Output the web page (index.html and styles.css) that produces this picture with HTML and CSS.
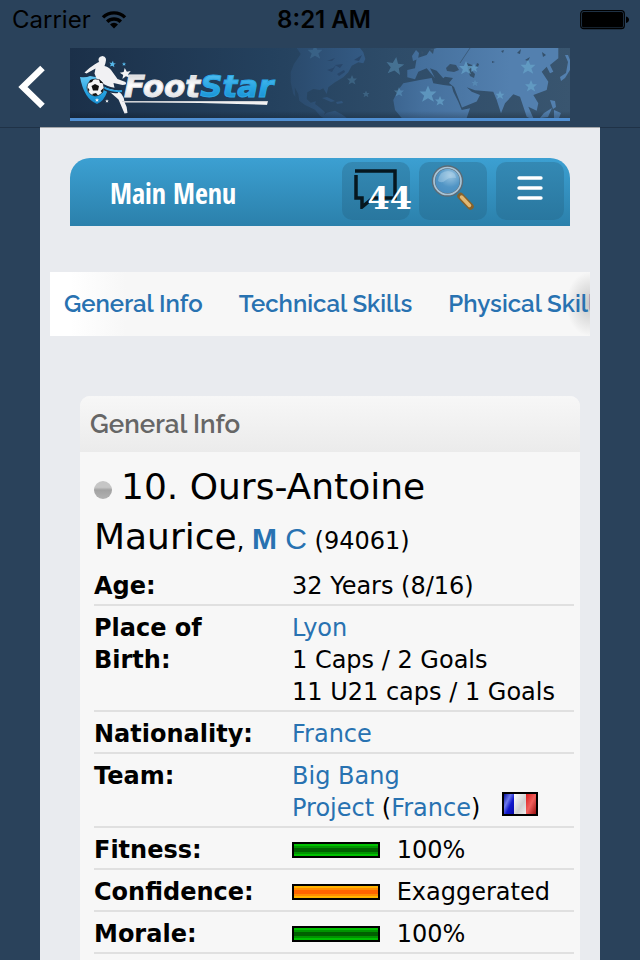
FILE: index.html
```
<!DOCTYPE html>
<html lang="en">
<head>
  <meta charset="UTF-8" />
  <meta name="viewport" content="width=device-width, initial-scale=1" />
  <title>FootStar</title>
  <link rel="stylesheet" href="styles.css">
</head>
<body>
  <div class="status-bar">
    <div class="carrier">
      <span>Carrier</span>
      <svg width="26" height="20" viewBox="0 0 26 20" fill="none" stroke="#000" stroke-width="3.4">
        <path d="M2 7.4a15.600 15.600 0 0 1 22 0"/>
        <path d="M6.200 11.800a9.600 9.600 0 0 1 13.600 0"/>
        <path d="M13 18.500l-4-4.100a5.700 5.700 0 0 1 8 0z" fill="#000" stroke="none"/>
      </svg>
    </div>
    <time class="clock">8:21 AM</time>
    <svg class="battery" width="50" height="20" viewBox="0 0 50 20">
      <rect x="0.700" y="0.700" width="43.600" height="18" rx="3" fill="none" stroke="#000" stroke-width="1.200"/>
      <rect x="2" y="2" width="41" height="15.400" rx="1.500"/>
      <path d="M46 6.500c4 .5 4 6 0 6.500z"/>
    </svg>
  </div>

  <header class="header">
    <button class="back" type="button" aria-label="Back">
      <svg width="28" height="46" viewBox="0 0 28 46" fill="none" stroke="#fff" stroke-width="6.500">
        <path d="M24.500 4L5 23l19.500 19"/>
      </svg>
    </button>
    <a class="banner" href="#" aria-label="FootStar">
      <svg viewBox="0 0 500 73">
        <defs>
          <linearGradient id="sea"><stop offset="0" stop-color="#1b3049"/><stop offset=".4" stop-color="#24415e"/><stop offset=".65" stop-color="#2e4c69"/><stop offset="1" stop-color="#39556f"/></linearGradient>
          <linearGradient id="land" gradientUnits="userSpaceOnUse" x1="220" y1="0" x2="440" y2="0"><stop offset="0" stop-color="#2a4a6c"/><stop offset=".35" stop-color="#345b85"/><stop offset=".6" stop-color="#45709d"/><stop offset="1" stop-color="#5380af"/></linearGradient>
          <linearGradient id="silver" x2="0" y2="1"><stop offset="0" stop-color="#bfc1c6"/><stop offset=".5" stop-color="#fff"/><stop offset="1" stop-color="#cfd1d5"/></linearGradient>
          <linearGradient id="blue" x2="0" y2="1"><stop offset="0" stop-color="#65c8f5"/><stop offset=".55" stop-color="#27a5e3"/><stop offset="1" stop-color="#1589cc"/></linearGradient>
          <linearGradient id="shade" x2="0" y2="1"><stop offset=".9" stop-color="#000" stop-opacity="0"/><stop offset="1" stop-color="#000" stop-opacity=".2"/></linearGradient>
          <path id="star" d="M0-10L3-3 10-3 4.500 2 7 9 0 5-7 9-4.500 2-10-3-3-3z"/>
        </defs>
        <rect width="500" height="70" fill="url(#sea)"/>

        <!-- world map -->
        <g fill="url(#land)">
          <path d="M226.700 0L230.700 6 224 16 220.700 24.300V34.300L223.300 46 225.300 48.700 224.700 39.300 228.300 46 229.300 52.700 235 57 245 61.700 250 67.700 253.300 70H276.700L272 66.500 265 62.700 256.700 64.700 254 67 255 64.300 249.300 59.300 245 56 246 53.300 240.700 54.700 236.700 51 237.300 44.300 243.300 41 250 42 253.300 40.300 256.700 46 258.300 39.300 265 34.300 273.300 29.300 278.300 24.300 281.700 17.700 288.300 14.300 293.300 15.300 295.300 11 293.300 4.300 290 0z"/>
          <path d="M252 50l5-1 8 4-4 1zM266 54l6-1 1 2-6 1z"/>
          <path d="M328.300 42L333.300 35.300 350 32 361.700 30 363.300 35.300 373.300 37 381.700 38 383.300 43.700 388.300 53.700 391.700 62 400 60.300 396.700 70H331.700L325 62 323.300 52z"/>
          <path d="M379 35l5 4 8 20.500 14.700-6 3.300-6.500-8.300-3.300-5-4.500 8.300 3 18.300 1.500 3.400 8.300L431 65.300 435 55.300 443.300 46.300 450 48.700 456.700 68.700 459.300 70h4L458.300 58.700 466.700 62.700 468.300 55.300 463.300 47 476.700 42 478.300 33.700 471.700 23.700 476.700 18.700 480 25.300 483.300 23.700 480 17 488.300 10.300V0H366.700L360 2 356.700 7 346.700 10.300 345 20.300 337.300 22V29.300L345 31.300 348.300 23.700 356.700 20.300 365 30.300 360 20.300 366.700 22.700 373.300 30.300 375 28.700 383 30z"/>
          <path d="M342 8l4-6 3 3-1 6-5 2zM490 29l6-4 2-11-3-7h3l2 5v10l-5 8-4 3zM480 52l5 1 1 6-3 2zM484 62l7 3-2 5h-5zM474 65l8-5-4 9-8 1z"/>
        </g>
        <g fill="#35516c">
          <path d="M376 20l4-4 6 1 3 5-5 2-7-1zM397 15l5 2-1 5 4 4-1 4-4-2-2-6zM407 15l2 1-1 3-2-1zM351 3l3 1-2 3zM359 2l5-1-1 5zM431 3l3-1-1 3zM422 13l3 1-3 1zM447 5l4-4-1 5zM455 12l5-3-2 4zM472 4l4 3-3 2z"/>
          <path d="M257 22l6-2 3-3-4 7zM265 17l8-1-3 4zM267 26l7-4 1 2-6 4zM257 13l8-3-3 3zM284 12l8-5-3 6z" fill="#29476a"/>
        </g>
        <path d="M390 15l6-9 4-6" fill="none" stroke="#35516c" stroke-width=".7"/>
        <g fill="#68a5cb" opacity=".7">
          <use href="#star" transform="translate(325 18) rotate(8) scale(.9)" opacity=".6"/>
          <use href="#star" transform="translate(358 46) scale(.85)"/>
          <use href="#star" transform="translate(370 53) scale(.5)"/>
          <use href="#star" transform="translate(396 20) scale(.7)"/>
          <use href="#star" transform="translate(404 20) scale(.45)"/>
          <use href="#star" transform="translate(458 19) scale(.75)"/>
          <use href="#star" transform="translate(461 38) scale(.6)"/>
          <use href="#star" transform="translate(430 47) scale(.45)"/>
          <use href="#star" transform="translate(405 35) scale(.35)" opacity=".5"/>
          <use href="#star" transform="translate(329 44) scale(.5)" opacity=".6"/>
          <use href="#star" transform="translate(282 32) scale(.5)" opacity=".4"/>
          <use href="#star" transform="translate(296 46) scale(.35)" opacity=".4"/>
          <use href="#star" transform="translate(245 4) scale(.75)" opacity=".3"/>
        </g>

        <!-- player -->
        <path d="M10 29q6 1 10-1l16 3 1 13q-3 9-10 12-13-5-17-27z" fill="url(#blue)"/>
        <path d="M29 14q-2-5 3.500-6 5 1 3 7l-1 3q5 1 8 6l5 7 8 3q2 3-3 3l-9-2 1 5 7 6q3 4 3 8 3 5 3 11l-3 .5-6-14-8-7-12-9-4-10 1-5-9 5-2-1q5-5 10-8 4-3 7-3z" fill="#f1f1f3"/>
        <path d="M33 37q9 5 18 4M34 41q8 4 14 3" fill="none" stroke="#1c3048" stroke-width="2.200"/>
        <path d="M33 39q9 5 19 4" fill="none" stroke="#2ba5e3" stroke-width="2"/>
        <circle cx="25.500" cy="39.500" r="8.500" fill="#f4f4f5" stroke="#17222f" stroke-width=".7"/>
        <path d="M25 36l4 2-1 4.500h-5L21.500 38zM20 32l4-1-2 3-3 1zM29 31l4 4-3 0zM17.500 39l2 3-1 2zM33.500 40l-1 5-2-2zM22 46l4-1 2 2.500-4 .5z" fill="#111"/>
        <g fill="#f4f4f5">
          <use href="#star" transform="translate(55.500 25.500) rotate(-8) scale(.55)"/>
          <use href="#star" transform="translate(27 52) scale(.2)"/>
          <use href="#star" transform="translate(37 53) scale(.18)"/>
        </g>
        <g fill="#56b8ea">
          <use href="#star" transform="translate(42.500 16) rotate(8) scale(.33)"/>
          <use href="#star" transform="translate(54 16) scale(.2)"/>
        </g>
        <path d="M52 53h146l-1 4q-70-3-145-2.500z" fill="url(#silver)"/>
        <text class="logo-text" x="54" y="49"><tspan fill="url(#silver)" stroke="#e4e5e8">Foot</tspan><tspan fill="url(#blue)" stroke="#2ba7e5">Star</tspan></text>

        <rect width="500" height="70" fill="url(#shade)"/>
        <rect y="70" width="500" height="3" fill="#508fd2"/>
      </svg>
    </a>
  </header>

  <div class="page">
    <main class="content">
      <nav class="main-menu">
        <span class="menu-title">Main Menu</span>
        <button class="menu-btn" type="button" aria-label="Messages">
          <svg width="46" height="42" viewBox="0 0 46 42" fill="none" stroke="#06171f" stroke-width="3.500">
            <path d="M3 8v23h6v9l11-9h22V4H2"/>
          </svg>
          <span class="badge">44</span>
        </button>
        <button class="menu-btn" type="button" aria-label="Search">
          <svg width="46" height="46" viewBox="0 2 46 46">
            <defs>
              <radialGradient id="lens" cx=".6" cy=".3" r=".7"><stop offset="0" stop-color="#9cc6e2"/><stop offset=".6" stop-color="#5195c5"/><stop offset="1" stop-color="#498dc0"/></radialGradient>
            </defs>
            <path d="M30.500 33l10 10.500" stroke="#86622c" stroke-width="6.500" stroke-linecap="round"/>
            <path d="M31.500 34l8 8.500" stroke="#e2b873" stroke-width="3.500" stroke-linecap="round"/>
            <circle cx="17.500" cy="18" r="14" fill="url(#lens)" stroke="#5b6b76" stroke-width="3.500"/>
            <circle cx="17.500" cy="18" r="13.500" fill="none" stroke="#a9c4d6" stroke-width="1.700"/>
            <path d="M8 18q1-10 10-10 8 1 8 7-7-1-10 2-4 4-8 1z" fill="#c3dff0" opacity=".35"/>
          </svg>
        </button>
        <button class="menu-btn" type="button" aria-label="Menu">
          <svg width="26" height="26" viewBox="0 0 26 26" stroke="#fff" stroke-width="3.400" stroke-linecap="round">
            <path d="M2 3h22M2 13h22M2 23h22"/>
          </svg>
        </button>
      </nav>

      <nav class="tabs">
        <a href="#general">General Info</a>
        <a href="#technical">Technical Skills</a>
        <a href="#physical">Physical Skills</a>
      </nav>

      <section class="card" id="general">
        <h2 class="card-title">General Info</h2>
        <div class="card-body">
          <h1 class="player"><span class="dot"></span>10. Ours-Antoine Maurice<span class="details">, <a class="position" href="#"><b>M</b> C</a> (94061)</span></h1>
          <table class="info">
            <tr>
              <th scope="row">Age:</th>
              <td>32 Years (8/16)</td>
            </tr>
            <tr>
              <th scope="row">Place of Birth:</th>
              <td><a href="#">Lyon</a><br>1 Caps / 2 Goals<br>11 U21 caps / 1 Goals</td>
            </tr>
            <tr>
              <th scope="row">Nationality:</th>
              <td><a href="#">France</a></td>
            </tr>
            <tr>
              <th scope="row">Team:</th>
              <td><a href="#">Big Bang<br>Project</a> (<a href="#">France</a>)
                <svg class="flag" width="36" height="24" viewBox="0 0 36 24">
                  <defs>
                    <linearGradient id="fb" x2="1" y2="1"><stop offset="0" stop-color="#0a14a0"/><stop offset=".35" stop-color="#6c78ec"/><stop offset=".6" stop-color="#1119cd"/><stop offset="1" stop-color="#0808a8"/></linearGradient>
                    <linearGradient id="fw" x2="1" y2="1"><stop offset="0" stop-color="#fff"/><stop offset=".6" stop-color="#d0d0d0"/><stop offset="1" stop-color="#eee"/></linearGradient>
                    <linearGradient id="fr" x2="1" y2="1"><stop offset="0" stop-color="#dd1c1c"/><stop offset=".5" stop-color="#f0605c"/><stop offset="1" stop-color="#9b1010"/></linearGradient>
                  </defs>
                  <rect width="36" height="24"/>
                  <path d="M2 2h10v20H2z" fill="url(#fb)"/>
                  <path d="M12 2h12v20H12z" fill="url(#fw)"/>
                  <path d="M24 2h10v20H24z" fill="url(#fr)"/>
                </svg>
              </td>
            </tr>
            <tr>
              <th scope="row">Fitness:</th>
              <td><span class="bar bar-green"></span> 100%</td>
            </tr>
            <tr>
              <th scope="row">Confidence:</th>
              <td><span class="bar bar-orange"></span> Exaggerated</td>
            </tr>
            <tr>
              <th scope="row">Morale:</th>
              <td><span class="bar bar-green"></span> 100%</td>
            </tr>
          </table>
        </div>
      </section>
    </main>
  </div>
</body>
</html>
```
FILE: styles.css
```
:root {
  --navy: #2a425b;
  --link: #2872b1;
  --panel: #f7f7f7;
  --page: #e9ebef;
}
* { box-sizing: border-box; }
body {
  margin: 0;
  min-height: 100vh;
  display: flex;
  flex-direction: column;
  background: var(--navy);
  color: #000;
  font-family: Verdana, "DejaVu Sans", sans-serif;
  font-size: 24px;
  line-height: 32px;
}
a {
  color: var(--link);
  text-decoration: none;
}
button {
  border: 0;
  padding: 0;
  background: none;
  cursor: pointer;
}
svg { display: block; }

/* status bar */
.status-bar {
  display: grid;
  grid-template-columns: 1fr auto 1fr;
  align-items: center;
  height: 40px;
  padding: 0 10px 0 12px;
  font-family: Inter, sans-serif;
}
.carrier {
  display: flex;
  align-items: center;
  gap: 10px;
}
.clock {
  padding-left: 6px;
  font-weight: 600;
}
.battery { justify-self: end; }

/* header */
.header {
  display: flex;
  align-items: center;
  height: 87px;
  padding: 2px 70px 0 0;
}
.back {
  flex: none;
  width: 70px;
  padding: 4px 0 0 18px;
}
.banner { flex: 1; }
.logo-text {
  font: italic bold 31px "DejaVu Sans", sans-serif;
}

.page {
  flex: 1;
  display: flex;
  padding: 0 40px;
  border-top: 1px solid #1f3247;
}
.content {
  flex: 1;
  min-width: 0;
  display: flex;
  flex-direction: column;
  margin-top: -1px;
  padding-top: 30px;
  border-top: 1px solid #a3a5a9;
  background: var(--page);
}

/* main menu */
.main-menu {
  display: flex;
  gap: 9px;
  height: 68px;
  margin: 0 30px;
  padding: 4px 6px 6px 40px;
  border-radius: 20px 20px 0 0;
  background: linear-gradient(#3ca0d2, #2b80ab);
}
.menu-title {
  flex: 1;
  color: #fff;
  font: bold 28px/62px "Open Sans Condensed", "Liberation Sans Narrow", "DejaVu Sans Condensed", sans-serif;
}
.menu-btn {
  position: relative;
  width: 68px;
  height: 58px;
  padding-bottom: 6px;
  border-radius: 10px;
  background: linear-gradient(#3489b4, #29779f);
}
.menu-btn svg { margin: 0 auto; }
.badge {
  position: absolute;
  top: 16px;
  right: -2px;
  color: #fff;
  font: bold 32px/40px "DejaVu Serif", serif;
}

/* tabs */
.tabs {
  display: flex;
  gap: 36px;
  margin: 46px 10px 60px;
  padding: 0 14px;
  overflow: hidden;
  white-space: nowrap;
  background:
    radial-gradient(24px 32px at 100% 50%, #c8c8c8, rgba(247, 247, 247, 0)),
    linear-gradient(90deg, #fff 20px, var(--panel) 76px);
  font: 600 24px/64px Raleway, Lato, sans-serif;
}

/* card */
.card {
  flex: 1;
  margin: 0 20px 0 40px;
  border-radius: 10px 10px 0 0;
  background: var(--panel);
}
.card-title {
  margin: 0;
  padding: 0 10px;
  border-radius: 10px 10px 0 0;
  background: linear-gradient(#f7f7f7, #ebebeb);
  color: #666;
  font: 600 26px/56px Raleway, Lato, sans-serif;
}
.card-body { padding: 10px 6px 4px 14px; }
.player {
  margin: 0 0 2px;
  font-size: 36px;
  font-weight: normal;
  line-height: 50px;
}
.details {
  font-size: 24px;
  line-height: 32px;
}
.dot {
  display: inline-block;
  width: 18px;
  height: 18px;
  margin-right: 9px;
  border-radius: 50%;
  background: linear-gradient(#c6c6c6 35%, #a2a2a2 50%, #b2b2b2);
}
.position {
  font-family: "Liberation Sans", Arial, sans-serif;
  font-size: 30px;
}

/* info table */
.info {
  width: 100%;
  border-collapse: collapse;
  table-layout: fixed;
}
.info th,
.info td {
  padding: 6px 0 2px;
  border-bottom: 2px solid #e0e0e0;
  text-align: left;
  vertical-align: top;
}
.info th {
  width: 198px;
  padding-right: 40px;
}
.flag {
  display: inline-block;
  margin-left: 14px;
  vertical-align: baseline;
}
.bar {
  display: inline-block;
  width: 88px;
  height: 16px;
  margin-right: 9px;
  border: 2px solid #000;
}
.bar-green {
  background: linear-gradient(#00c000 2px, #009400 2px 4px, #006000 4px 8px, #009400 8px 10px, #00c000 10px);
}
.bar-orange {
  background: linear-gradient(#ffb400 2px, #ff8c00 2px 4px, #ff6400 4px 8px, #ff8c00 8px 10px, #ffb400 10px);
}
```
